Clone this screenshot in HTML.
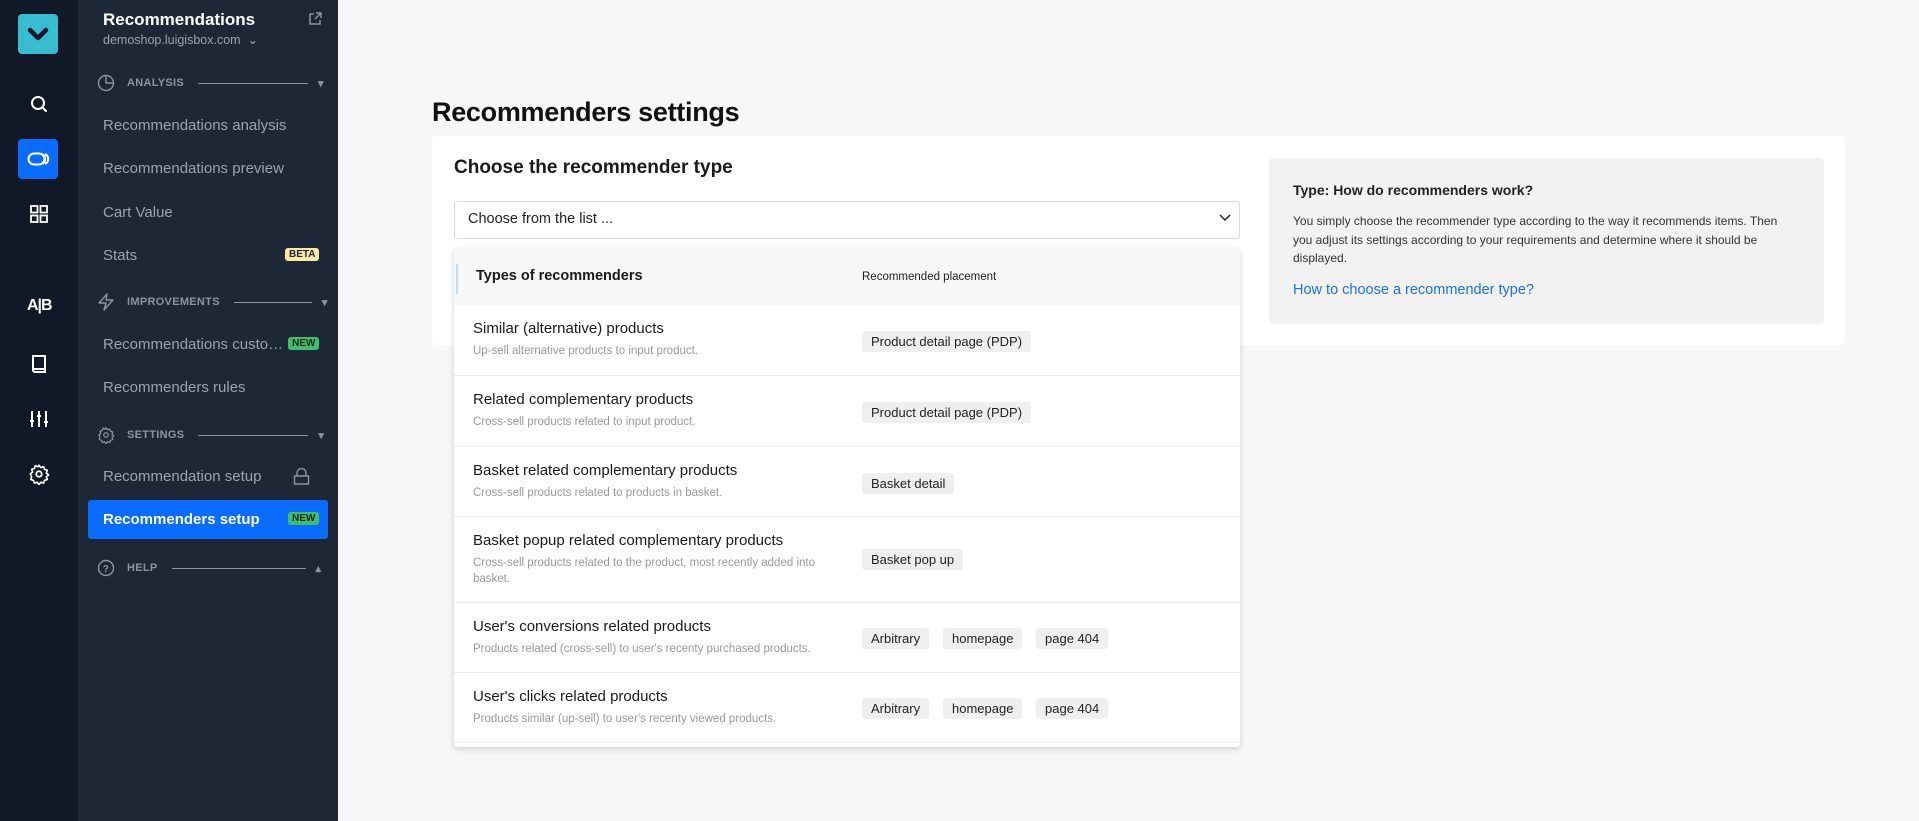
<!DOCTYPE html>
<html><head><meta charset="utf-8"><style>
*{margin:0;padding:0;box-sizing:border-box}
body{width:1919px;height:821px;overflow:hidden;background:#f7f7f7;font-family:"Liberation Sans",Arial,sans-serif;position:relative}
.abs{position:absolute}
#rail{left:0;top:0;width:78px;height:821px;background:#111827}
#side{left:78px;top:0;width:260px;height:821px;background:#1e2735}
.ri{position:absolute;left:28px;width:22px;height:22px}
.si{position:absolute;left:103px;color:#9ba3b0;font-size:15px;white-space:nowrap}
.sec{position:absolute;left:97px;color:#8c94a2;font-size:11px;font-weight:bold;letter-spacing:.3px;display:flex;align-items:center}
.sec svg{margin-right:12px}
.badge{position:absolute;font-size:10px;font-weight:bold;padding:1px 4px;border-radius:3px}
.row{position:absolute;left:0;width:786px;border-bottom:1px solid #ececec}
.rt{position:absolute;left:19px;font-size:15px;color:#1a1a1a;white-space:nowrap}
.rd{position:absolute;left:19px;font-size:11.5px;color:#9a9a9a;line-height:16px;width:360px}
.tag{position:absolute;background:#efefef;border-radius:3px;font-size:13px;color:#222;height:21px;line-height:21px;padding:0 9px;white-space:nowrap}
</style></head><body>
<div id="rail" class="abs">
  <div class="abs" style="left:18px;top:14px;width:40px;height:40px;background:#38bcd0;border-radius:4px"></div>
  <svg class="abs" style="left:25px;top:22px" width="26" height="24" viewBox="0 0 26 24"><path d="M5 8 L13 16 L21 8" stroke="#111827" stroke-width="4.5" fill="none" stroke-linecap="round" stroke-linejoin="round"/></svg>
  <svg class="ri" style="top:93px" viewBox="0 0 22 22"><circle cx="10" cy="10" r="6" stroke="#fff" stroke-width="2" fill="none"/><path d="M14.5 14.5 L18 18" stroke="#fff" stroke-width="2" stroke-linecap="round"/></svg>
  <div class="abs" style="left:18px;top:139px;width:40px;height:40px;background:#0a6cff;border-radius:4px"></div>
  <svg class="abs" style="left:27px;top:150px" width="23" height="18" viewBox="0 0 23 18"><rect x="1.5" y="3.5" width="16" height="11" rx="5.5" stroke="#fff" stroke-width="2" fill="none"/><path d="M15 4 A5.5 5.5 0 0 1 15 14 M18 4 A5.5 5.5 0 0 1 18 14" stroke="#fff" stroke-width="2" fill="none"/></svg>
  <svg class="ri" style="top:203px" viewBox="0 0 22 22"><rect x="3" y="3" width="6.5" height="6.5" stroke="#fff" stroke-width="1.8" fill="none"/><rect x="12.5" y="3" width="6.5" height="6.5" stroke="#fff" stroke-width="1.8" fill="none"/><rect x="3" y="12.5" width="6.5" height="6.5" stroke="#fff" stroke-width="1.8" fill="none"/><rect x="12.5" y="12.5" width="6.5" height="6.5" stroke="#fff" stroke-width="1.8" fill="none"/></svg>
  <div class="abs" style="left:27px;top:297px;color:#fff;font-size:16px;font-weight:bold;letter-spacing:-1px">A|B</div>
  <svg class="ri" style="top:353px" viewBox="0 0 22 22"><path d="M5 3 H17 V19 H7 A2 2 0 0 1 5 17 Z M5 16 H17" stroke="#fff" stroke-width="2" fill="none"/></svg>
  <svg class="ri" style="top:408px" viewBox="0 0 22 22"><path d="M4 3V19M11 3V19M18 3V19M2 13H6M9 8H13M16 14H20" stroke="#fff" stroke-width="2" fill="none"/></svg>
  <svg class="ri" style="top:463px" viewBox="0 0 24 24"><circle cx="12" cy="12" r="3" stroke="#fff" stroke-width="2" fill="none"/><path d="M12 2.5l2 2.5 3-1 1 3 3 1-1 3 2.5 2-2.5 2 1 3-3 1-1 3-3-1-2 2.5-2-2.5-3 1-1-3-3-1 1-3L2.5 12 5 10 4 7l3-1 1-3 3 1z" stroke="#fff" stroke-width="1.8" fill="none" stroke-linejoin="round"/></svg>
</div>
<div id="side" class="abs">
  <div class="abs" style="left:25px;top:10px;color:#fff;font-size:17px;font-weight:bold">Recommendations</div>
  <div class="abs" style="left:25px;top:32px;color:#9ba3b0;font-size:12.5px">demoshop.luigisbox.com &nbsp;⌄</div>
  <svg class="abs" style="left:229px;top:11px" width="16" height="16" viewBox="0 0 16 16"><path d="M7 3H3V13H13V9M9 2H14V7M14 2L8 8" stroke="#8c94a2" stroke-width="1.5" fill="none"/></svg>
</div>
<div class="sec" style="top:74px"><svg width="18" height="18" viewBox="0 0 18 18"><circle cx="9" cy="9" r="7.5" stroke="#8c94a2" stroke-width="1.4" fill="none"/><path d="M9 1.5V9H16.5" stroke="#8c94a2" stroke-width="1.4" fill="none"/></svg>ANALYSIS<span style="display:inline-block;width:110px;height:1px;background:#8c94a2;margin:0 10px 0 14px"></span>▾</div>
<div class="si" style="top:117px">Recommendations analysis</div>
<div class="si" style="top:160px">Recommendations preview</div>
<div class="si" style="top:204px">Cart Value</div>
<div class="si" style="top:247px">Stats</div>
<div class="badge" style="left:285px;top:248px;background:#fbe9a6;color:#1e2735">BETA</div>
<div class="sec" style="top:293px"><svg width="18" height="18" viewBox="0 0 18 18"><path d="M10 1L2 10H9L7 17L16 7H9Z" stroke="#8c94a2" stroke-width="1.4" fill="none" stroke-linejoin="round"/></svg>IMPROVEMENTS<span style="display:inline-block;width:78px;height:1px;background:#8c94a2;margin:0 10px 0 14px"></span>▾</div>
<div class="si" style="top:336px;width:184px;overflow:hidden;text-overflow:ellipsis">Recommendations customization</div>
<div class="badge" style="left:288px;top:337px;background:#3fbf6b;color:#0f2b1a">NEW</div>
<div class="si" style="top:379px">Recommenders rules</div>
<div class="sec" style="top:426px"><svg width="18" height="18" viewBox="0 0 24 24"><circle cx="12" cy="12" r="3" stroke="#8c94a2" stroke-width="1.6" fill="none"/><path d="M12 2.5l2 2.5 3-1 1 3 3 1-1 3 2.5 2-2.5 2 1 3-3 1-1 3-3-1-2 2.5-2-2.5-3 1-1-3-3-1 1-3L2.5 12 5 10 4 7l3-1 1-3 3 1z" stroke="#8c94a2" stroke-width="1.6" fill="none"/></svg>SETTINGS<span style="display:inline-block;width:110px;height:1px;background:#8c94a2;margin:0 10px 0 14px"></span>▾</div>
<div class="si" style="top:468px">Recommendation setup</div>
<svg class="abs" style="left:293px;top:468px" width="17" height="18" viewBox="0 0 17 18"><path d="M4 8V5A4.5 4.5 0 0 1 13 5V8M1.5 8H15.5V16H1.5Z" stroke="#8c94a2" stroke-width="1.4" fill="none"/></svg>
<div class="abs" style="left:88px;top:500px;width:240px;height:39px;background:#0a6cff;border-radius:3px"></div>
<div class="si" style="top:511px;color:#fff;font-weight:bold">Recommenders setup</div>
<div class="badge" style="left:288px;top:512px;background:#3fbf6b;color:#0f2b1a">NEW</div>
<div class="sec" style="top:559px"><svg width="18" height="18" viewBox="0 0 18 18"><circle cx="9" cy="9" r="7.5" stroke="#8c94a2" stroke-width="1.4" fill="none"/><text x="9" y="13" font-size="10" text-anchor="middle" fill="#8c94a2" font-family="Liberation Sans">?</text></svg>HELP<span style="display:inline-block;width:134px;height:1px;background:#8c94a2;margin:0 10px 0 14px"></span>▴</div>

<div class="abs" style="left:432px;top:97px;font-size:27px;font-weight:bold;color:#111;letter-spacing:-0.3px">Recommenders settings</div>
<div class="abs" style="left:432px;top:136px;width:1413px;height:209px;background:#fff;border-radius:4px"></div>
<div class="abs" style="left:454px;top:157px;font-size:19px;font-weight:bold;color:#1a1a1a">Choose the recommender type</div>
<div class="abs" style="left:454px;top:201px;width:786px;height:38px;border:1px solid #dcdcdc;border-radius:3px;background:#fff"></div>
<div class="abs" style="left:468px;top:211px;font-size:14.5px;color:#222">Choose from the list ...</div>
<svg class="abs" style="left:1219px;top:213px" width="12" height="10" viewBox="0 0 12 10"><path d="M1 2L6 7L11 2" stroke="#222" stroke-width="1.5" fill="none"/></svg>

<div class="abs" style="left:1269px;top:158px;width:555px;height:166px;background:#f2f2f2;border-radius:4px"></div>
<div class="abs" style="left:1293px;top:182px;font-size:14px;font-weight:bold;color:#222">Type: How do recommenders work?</div>
<div class="abs" style="left:1293px;top:212px;font-size:12px;color:#333;line-height:18.5px;width:500px">You simply choose the recommender type according to the way it recommends items. Then you adjust its settings according to your requirements and determine where it should be displayed.</div>
<div class="abs" style="left:1293px;top:282px;font-size:14.5px;color:#1a73e8">How to choose a recommender type?</div>

<div class="abs" style="left:454px;top:248px;width:786px;height:499px;background:#fff;box-shadow:0 2px 6px rgba(0,0,0,.18);border-radius:3px;overflow:hidden">
  <div class="abs" style="left:0;top:0;width:786px;height:57px;background:#f7f7f7"></div>
  <div class="abs" style="left:2px;top:16px;width:2px;height:30px;background:#c8d8f0"></div>
  <div class="abs" style="left:22px;top:20px;font-size:14.5px;font-weight:bold;color:#1a1a1a">Types of recommenders</div>
  <div class="abs" style="left:408px;top:23px;font-size:11.5px;color:#222">Recommended placement</div>
  <div class="row" style="top:57px;height:71px"><div class="rt" style="top:15px">Similar (alternative) products</div><div class="rd" style="top:38px">Up-sell alternative products to input product.</div><div class="tag" style="left:408px;top:26px">Product detail page (PDP)</div></div>
  <div class="row" style="top:128px;height:71px"><div class="rt" style="top:15px">Related complementary products</div><div class="rd" style="top:38px">Cross-sell products related to input product.</div><div class="tag" style="left:408px;top:26px">Product detail page (PDP)</div></div>
  <div class="row" style="top:199px;height:70px"><div class="rt" style="top:15px">Basket related complementary products</div><div class="rd" style="top:38px">Cross-sell products related to products in basket.</div><div class="tag" style="left:408px;top:26px">Basket detail</div></div>
  <div class="row" style="top:269px;height:86px"><div class="rt" style="top:15px">Basket popup related complementary products</div><div class="rd" style="top:38px">Cross-sell products related to the product, most recently added into basket.</div><div class="tag" style="left:408px;top:32px">Basket pop up</div></div>
  <div class="row" style="top:355px;height:70px"><div class="rt" style="top:15px">User's conversions related products</div><div class="rd" style="top:38px">Products related (cross-sell) to user's recenty purchased products.</div><div class="tag" style="left:408px;top:25px">Arbitrary</div><div class="tag" style="left:489px;top:25px">homepage</div><div class="tag" style="left:582px;top:25px">page 404</div></div>
  <div class="row" style="top:425px;height:70px"><div class="rt" style="top:15px">User's clicks related products</div><div class="rd" style="top:38px">Products similar (up-sell) to user's recenty viewed products.</div><div class="tag" style="left:408px;top:25px">Arbitrary</div><div class="tag" style="left:489px;top:25px">homepage</div><div class="tag" style="left:582px;top:25px">page 404</div></div>
</div>
</body></html>
